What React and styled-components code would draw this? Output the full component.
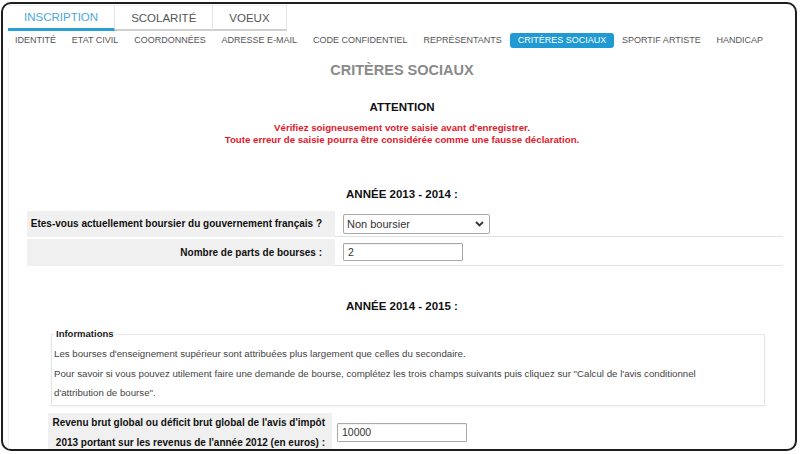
import React from "react";
import styled, { createGlobalStyle } from "styled-components";

const Global = createGlobalStyle`
  html, body { margin: 0; padding: 0; background: #fff; width: 800px; height: 454px; overflow: hidden; }
  body { font-family: "Liberation Sans", Arial, sans-serif; }
  * { box-sizing: border-box; }
`;

const Frame = styled.div`
  width: 796px;
  height: 449px;
  margin: 2px 0 0 1px;
  border: 2px solid #1e1e1e;
  border-radius: 10px;
  overflow: hidden;
  background: #fff;
`;

const TabBar = styled.div`
  display: flex;
  align-items: flex-end;
  padding: 1px 0 0 5px;
`;

const Tab = styled.div`
  height: 26px;
  padding: 0 16px;
  display: flex;
  align-items: center;
  font-size: 11.5px;
  color: ${(p) => (p.$active ? "#4aa8dc" : "#555")};
  border-top: 1px solid #f1f1f1;
  border-right: 1px solid #e4e4e4;
  border-bottom: ${(p) => (p.$active ? "3px solid #2a9fd6" : "2px solid #d0d0d0")};
`;

const SubNav = styled.div`
  display: flex;
  align-items: center;
  padding: 2px 0 0 4px;
  height: 17px;
`;

const NavItem = styled.div`
  height: 15px;
  line-height: 15px;
  padding: 0 7.95px;
  font-size: 9px;
  color: ${(p) => (p.$active ? "#fff" : "#555")};
  background: ${(p) => (p.$active ? "#1f9ad2" : "transparent")};
  border-radius: 3px;
  white-space: nowrap;
`;

const Content = styled.div`
  margin-left: 5px;
  border-left: 1px solid #eeeeee;
  height: 420px;
  display: flex;
  flex-direction: column;
  align-items: flex-start;
`;

const Title = styled.div`
  width: 100%;
  text-align: center;
  margin-top: 13px;
  font-size: 14.5px;
  line-height: 18px;
  font-weight: bold;
  color: #8a8a8a;
`;

const Heading = styled.div`
  width: 100%;
  text-align: center;
  margin-top: ${(p) => p.$mt}px;
  font-size: 11.5px;
  line-height: 14px;
  font-weight: bold;
  color: #111;
`;

const Warning = styled.div`
  width: 100%;
  text-align: center;
  margin-top: 8px;
  font-size: 9.7px;
  line-height: 12px;
  font-weight: bold;
  color: #e2192b;
`;

const FormTable = styled.div`
  display: grid;
  grid-template-columns: ${(p) => p.$label}px 1fr;
  row-gap: 2px;
  width: ${(p) => p.$width}px;
  margin-left: ${(p) => p.$left}px;
  margin-top: ${(p) => p.$mt}px;
`;

const Label = styled.div`
  background: #f0f0f0;
  min-height: ${(p) => p.$h}px;
  display: flex;
  align-items: center;
  justify-content: flex-end;
  text-align: right;
  padding: 0 ${(p) => p.$pr}px 0 4px;
  font-size: 10px;
  line-height: ${(p) => p.$lh || 12}px;
  font-weight: bold;
  color: #111;
  white-space: nowrap;
`;

const Value = styled.div`
  min-height: ${(p) => p.$h}px;
  display: flex;
  align-items: center;
  padding-left: ${(p) => p.$pl}px;
  border-bottom: 1px solid #e2e2e2;
`;

const SelectWrap = styled.div`
  position: relative;
  width: 147px;
  height: 20px;
`;

const Select = styled.select`
  appearance: none;
  width: 100%;
  height: 100%;
  border: 1px solid #a9a9a9;
  border-radius: 2px;
  background: #fff;
  padding: 0 0 0 3px;
  font-family: "Liberation Sans", Arial, sans-serif;
  font-size: 11px;
  color: #333;
  outline: none;
`;

const Chevron = styled.svg`
  position: absolute;
  right: 6px;
  top: 7px;
  pointer-events: none;
`;

const Input = styled.input`
  width: ${(p) => p.$w}px;
  height: ${(p) => p.$h}px;
  border: 1px solid #a9a9a9;
  border-radius: 1px;
  box-shadow: inset 0 1px 1px rgba(0, 0, 0, 0.06);
  padding: 0 0 0 4px;
  font-family: "Liberation Sans", Arial, sans-serif;
  font-size: 10.5px;
  color: #333;
  outline: none;
`;

const Fieldset = styled.fieldset`
  margin: 15px 0 0 42px;
  width: 714px;
  padding: 0 2px 2px 2px;
  border: 1px solid #e6e6e6;
  box-shadow: 0 1px 2px rgba(0, 0, 0, 0.05);
`;

const Legend = styled.legend`
  padding: 0 2px;
  margin-left: 0;
  font-size: 9.5px;
  line-height: 12px;
  font-weight: bold;
  color: #222;
`;

const InfoText = styled.div`
  margin-top: 4px;
  font-size: 9.7px;
  line-height: 19.5px;
  color: #444;
  white-space: nowrap;
`;

const subItems = [
  "IDENTITÉ",
  "ETAT CIVIL",
  "COORDONNÉES",
  "ADRESSE E-MAIL",
  "CODE CONFIDENTIEL",
  "REPRÉSENTANTS",
  "CRITÈRES SOCIAUX",
  "SPORTIF ARTISTE",
  "HANDICAP",
];

export default function App() {
  return (
    <>
      <Global />
      <Frame>
        <TabBar>
          <Tab $active>INSCRIPTION</Tab>
          <Tab>SCOLARITÉ</Tab>
          <Tab>VOEUX</Tab>
        </TabBar>
        <SubNav>
          {subItems.map((s) => (
            <NavItem key={s} $active={s === "CRITÈRES SOCIAUX"}>
              {s}
            </NavItem>
          ))}
        </SubNav>
        <Content>
          <Title>CRITÈRES SOCIAUX</Title>
          <Heading $mt={21}>ATTENTION</Heading>
          <Warning>
            Vérifiez soigneusement votre saisie avant d'enregistrer.
            <br />
            Toute erreur de saisie pourra être considérée comme une fausse déclaration.
          </Warning>
          <Heading $mt={41}>ANNÉE 2013 - 2014 :</Heading>
          <FormTable $label={308} $width={756} $left={18} $mt={10}>
            <Label $h={25} $pr={13}>
              Etes-vous actuellement boursier du gouvernement français ?
            </Label>
            <Value $h={26} $pl={8}>
              <SelectWrap>
                <Select defaultValue="non">
                  <option value="non">Non boursier</option>
                  <option value="oui">Boursier</option>
                </Select>
                <Chevron width="9" height="6" viewBox="0 0 9 6">
                  <path d="M1 1 L4.5 4.5 L8 1" fill="none" stroke="#333" strokeWidth="1.8" />
                </Chevron>
              </SelectWrap>
            </Value>
            <Label $h={26} $pr={13}>
              Nombre de parts de bourses :
            </Label>
            <Value $h={27} $pl={8}>
              <Input $w={120} $h={18} defaultValue="2" />
            </Value>
          </FormTable>
          <Heading $mt={33}>ANNÉE 2014 - 2015 :</Heading>
          <Fieldset>
            <Legend>Informations</Legend>
            <InfoText>
              Les bourses d'enseignement supérieur sont attribuées plus largement que celles du secondaire.
              <br />
              Pour savoir si vous pouvez utilement faire une demande de bourse, complétez les trois champs suivants puis cliquez sur "Calcul de l'avis conditionnel
              <br />
              d'attribution de bourse".
            </InfoText>
          </Fieldset>
          <FormTable $label={284} $width={717} $left={39} $mt={7}>
            <Label $h={40} $pr={7} $lh={20}>
              Revenu brut global ou déficit brut global de l'avis d'impôt
              <br />
              2013 portant sur les revenus de l'année 2012 (en euros) :
            </Label>
            <Value $h={40} $pl={5}>
              <Input $w={130} $h={19} defaultValue="10000" />
            </Value>
          </FormTable>
        </Content>
      </Frame>
    </>
  );
}
